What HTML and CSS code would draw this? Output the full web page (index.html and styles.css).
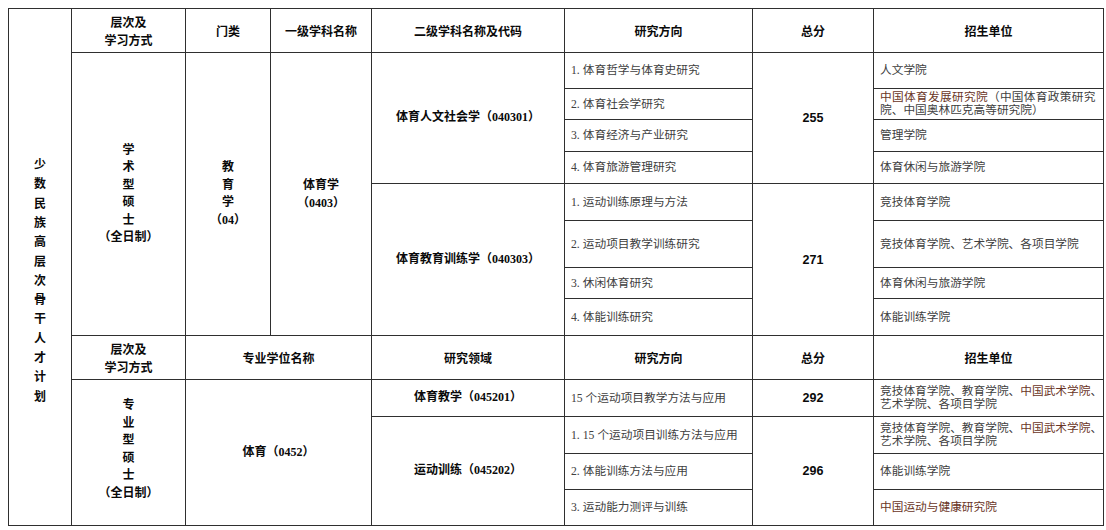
FILE: index.html
```html
<!DOCTYPE html>
<html lang="zh-CN">
<head>
<meta charset="utf-8">
<title>少数民族高层次骨干人才计划</title>
<link rel="stylesheet" href="styles.css">
</head>
<body>
<table class="plan">
  <colgroup>
    <col class="w1"><col class="w2"><col class="w3"><col class="w4"><col class="w5"><col class="w6"><col class="w7"><col class="w8">
  </colgroup>
  <tbody>
    <tr class="r44">
      <td rowspan="14" class="side"><div class="side-text">少<br>数<br>民<br>族<br>高<br>层<br>次<br>骨<br>干<br>人<br>才<br>计<br>划</div></td>
      <th>层次及<br>学习方式</th>
      <th>门类</th>
      <th>一级学科名称</th>
      <th>二级学科名称及代码</th>
      <th>研究方向</th>
      <th>总分</th>
      <th>招生单位</th>
    </tr>
    <tr class="r36">
      <td rowspan="8" class="b stack">学<br>术<br>型<br>硕<br>士<br>（全日制）</td>
      <td rowspan="8" class="b stack">教<br>育<br>学<br>（04）</td>
      <td rowspan="8" class="b stack2">体育学<br>（0403）</td>
      <td rowspan="4" class="b">体育人文社会学（040301）</td>
      <td class="dir"><span class="no">1.</span>体育哲学与体育史研究</td>
      <td rowspan="4" class="num">255</td>
      <td class="unit">人文学院</td>
    </tr>
    <tr class="r31">
      <td class="dir"><span class="no">2.</span>体育社会学研究</td>
      <td class="unit"><span class="just"><span class="hl">中国体育发展研究院</span>（中国体育政策研究</span><br>院、中国奥林匹克高等研究院）</td>
    </tr>
    <tr class="r32">
      <td class="dir"><span class="no">3.</span>体育经济与产业研究</td>
      <td class="unit">管理学院</td>
    </tr>
    <tr class="r32">
      <td class="dir"><span class="no">4.</span>体育旅游管理研究</td>
      <td class="unit">体育休闲与旅游学院</td>
    </tr>
    <tr class="r37">
      <td rowspan="4" class="b">体育教育训练学（040303）</td>
      <td class="dir"><span class="no">1.</span>运动训练原理与方法</td>
      <td rowspan="4" class="num">271</td>
      <td class="unit">竞技体育学院</td>
    </tr>
    <tr class="r47">
      <td class="dir"><span class="no">2.</span>运动项目教学训练研究</td>
      <td class="unit">竞技体育学院、艺术学院、各项目学院</td>
    </tr>
    <tr class="r31">
      <td class="dir"><span class="no">3.</span>休闲体育研究</td>
      <td class="unit">体育休闲与旅游学院</td>
    </tr>
    <tr class="r37">
      <td class="dir"><span class="no">4.</span>体能训练研究</td>
      <td class="unit">体能训练学院</td>
    </tr>
    <tr class="r44">
      <th>层次及<br>学习方式</th>
      <th colspan="2">专业学位名称</th>
      <th>研究领域</th>
      <th>研究方向</th>
      <th>总分</th>
      <th>招生单位</th>
    </tr>
    <tr class="r37">
      <td rowspan="4" class="b stack pro">专<br>业<br>型<br>硕<br>士<br>（全日制）</td>
      <td rowspan="4" colspan="2" class="b">体育（0452）</td>
      <td class="b">体育教学（045201）</td>
      <td class="dir">15 个运动项目教学方法与应用</td>
      <td class="num">292</td>
      <td class="unit">竞技体育学院、教育学院、<span class="hl">中国武术学院</span>、<br>艺术学院、各项目学院</td>
    </tr>
    <tr class="r37">
      <td rowspan="3" class="b">运动训练（045202）</td>
      <td class="dir"><span class="no">1.</span>15 个运动项目训练方法与应用</td>
      <td rowspan="3" class="num">296</td>
      <td class="unit">竞技体育学院、教育学院、<span class="hl">中国武术学院</span>、<br>艺术学院、各项目学院</td>
    </tr>
    <tr class="r36">
      <td class="dir"><span class="no">2.</span>体能训练方法与应用</td>
      <td class="unit">体能训练学院</td>
    </tr>
    <tr class="r36">
      <td class="dir"><span class="no">3.</span>运动能力测评与训练</td>
      <td class="unit"><span class="hl">中国运动与健康研究院</span></td>
    </tr>
  </tbody>
</table>
</body>
</html>
```

FILE: styles.css
```css
html, body {
  margin: 0;
  padding: 0;
  background: #ffffff;
}

.plan {
  margin: 8px 0 0 8px;
  width: 1095px;
  border-collapse: collapse;
  table-layout: fixed;
  font-family: "Liberation Serif", "Noto Sans CJK SC", serif;
  color: #111111;
}

.w1 { width: 63px; }
.w2 { width: 114px; }
.w3 { width: 85px; }
.w4 { width: 101px; }
.w5 { width: 193px; }
.w6 { width: 188px; }
.w7 { width: 121px; }
.w8 { width: 230px; }

.r31 { height: 31px; }
.r32 { height: 32px; }
.r36 { height: 36px; }
.r37 { height: 37px; }
.r44 { height: 44px; }
.r47 { height: 47px; }

.plan th,
.plan td {
  border: 1px solid #2f2f2f;
  padding: 0;
  text-align: center;
  vertical-align: middle;
  overflow: visible;
}

.plan th {
  font-family: "Noto Sans CJK SC", sans-serif;
  font-weight: 700;
  font-size: 12px;
  line-height: 18px;
  color: #0a0a0a;
}

.plan .side {
  font-family: "Noto Sans CJK SC", sans-serif;
  font-weight: 700;
  font-size: 12px;
  color: #0a0a0a;
}

.side-text {
  line-height: 19.3px;
  padding-top: 25px;
}

.plan .b {
  font-family: "Liberation Serif", "Noto Sans CJK SC", serif;
  font-weight: 700;
  font-size: 12px;
  line-height: 17.5px;
  color: #0a0a0a;
}

.plan .stack {
  line-height: 17.5px;
}

.plan .stack2 {
  line-height: 18px;
}

.plan .pro {
  padding-bottom: 6px;
}

.plan .dir,
.plan .unit {
  text-align: left;
  padding-left: 6px;
  font-size: 11.7px;
  line-height: 13px;
  font-weight: 400;
  color: #404040;
  white-space: nowrap;
}

.no {
  margin-right: 3px;
}

.just {
  letter-spacing: 0.3px;
}

.hl {
  color: #6a3526;
}

.plan .num {
  font-family: "Liberation Sans", Arial, sans-serif;
  font-weight: 700;
  font-size: 12.5px;
  color: #0a0a0a;
}
```
